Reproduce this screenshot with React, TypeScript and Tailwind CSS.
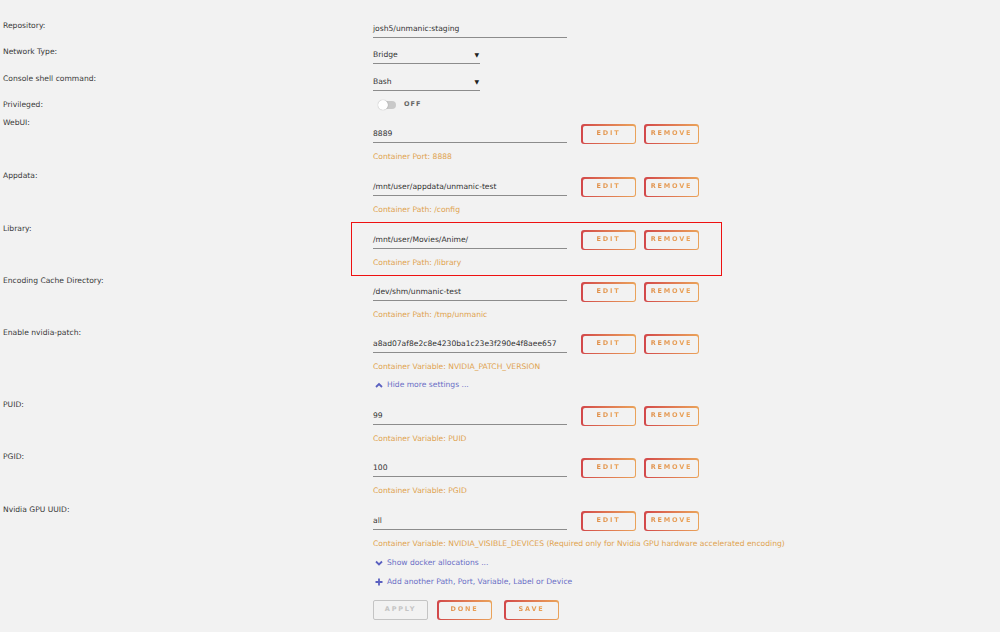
import type { ReactNode } from "react";

const font = { fontFamily: '"DejaVu Sans", Verdana, sans-serif' };

function GradButton({ label, disabled }: { label: string; disabled?: boolean }) {
  if (disabled) {
    return (
      <div className="flex h-[20px] w-[55px] items-center justify-center rounded-[2px] border-[1.5px] border-[#c4c4c4] text-[6.5px] font-bold tracking-[1.8px] text-[#c4c4c4]">
        {label}
      </div>
    );
  }
  return (
    <div className="h-[20px] w-[55px] rounded-[3px] bg-gradient-to-r from-[#d2474a] to-[#eaa35a] p-[1.5px]">
      <div className="flex h-full w-full items-center justify-center rounded-[2px] bg-[#f2f2f2]">
        <span className="bg-gradient-to-r from-[#e0904a] to-[#eba45a] bg-clip-text text-[6.5px] font-bold tracking-[1.8px] text-transparent">
          {label}
        </span>
      </div>
    </div>
  );
}

function Field({ value, width = "w-[194px]", arrow }: { value: string; width?: string; arrow?: boolean }) {
  return (
    <div className={`${width} flex h-[19px] items-start justify-between border-b border-[#8c8c8c] pt-[5px] text-[7.6px] leading-[10px] text-[#333]`}>
      <span>{value}</span>
      {arrow && <span className="pr-[1px] text-[6px] leading-[10px] text-[#222]">▼</span>}
    </div>
  );
}

function Row({ label, height, children }: { label: string; height: string; children: ReactNode }) {
  return (
    <div className={`flex ${height}`}>
      <div className="w-[373px] shrink-0 pl-[3px] pt-[2px] text-[7.6px] leading-[10px] text-[#3a3a3a]">{label}</div>
      <div className="flex-1">{children}</div>
    </div>
  );
}

function Controls({ value }: { value: string }) {
  return (
    <div className="flex items-start">
      <Field value={value} />
      <div className="ml-[14px] flex gap-[8px]">
        <GradButton label="EDIT" />
        <GradButton label="REMOVE" />
      </div>
    </div>
  );
}

function Note({ children }: { children: ReactNode }) {
  return <div className="mt-[8px] text-[7.6px] leading-[10px] text-[#e0a24e]">{children}</div>;
}

function EditRow({ label, value, note, height = "h-[52.5px]", highlight }: { label: string; value: string; note: string; height?: string; highlight?: boolean }) {
  return (
    <Row label={label} height={height}>
      <div className="relative pt-[8px]">
        {highlight && (
          <div className="pointer-events-none absolute left-[-22px] top-0 h-[54px] w-[371px] border border-[#ee1111]" />
        )}
        <Controls value={value} />
        <Note>{note}</Note>
      </div>
    </Row>
  );
}

function Link({ icon, text }: { icon: ReactNode; text: string }) {
  return (
    <div className="flex items-center gap-[4px] pl-[2px] text-[7.6px] leading-[10px] text-[#6a6fc6]">
      {icon}
      <span>{text}</span>
    </div>
  );
}

const ChevUp = (
  <svg width="8" height="6" viewBox="0 0 8 6"><path d="M1 5 L4 2 L7 5" stroke="#5a60c0" strokeWidth="1.8" fill="none" /></svg>
);
const ChevDown = (
  <svg width="8" height="6" viewBox="0 0 8 6"><path d="M1 1.5 L4 4.5 L7 1.5" stroke="#5a60c0" strokeWidth="1.8" fill="none" /></svg>
);
const Plus = (
  <svg width="8" height="8" viewBox="0 0 8 8"><path d="M4 0.5 V7.5 M0.5 4 H7.5" stroke="#5a60c0" strokeWidth="1.8" fill="none" /></svg>
);

export default function App() {
  return (
    <div style={font} className="h-[632px] w-[1000px] overflow-hidden bg-[#f2f2f2] pt-[19px]">
      <Row label="Repository:" height="h-[26px]">
        <Field value="josh5/unmanic:staging" />
      </Row>
      <Row label="Network Type:" height="h-[26.5px]">
        <Field value="Bridge" width="w-[107px]" arrow />
      </Row>
      <Row label="Console shell command:" height="h-[26.5px]">
        <Field value="Bash" width="w-[107px]" arrow />
      </Row>
      <Row label="Privileged:" height="h-[18px]">
        <div className="flex items-center pl-[6px] pt-[2px]">
          <div className="relative h-[8px] w-[17px] rounded-full bg-[#c9c9c9]">
            <div className="absolute left-[-1px] top-[-1px] h-[10px] w-[10px] rounded-full bg-white shadow-[0_0_1px_rgba(0,0,0,0.4)]" />
          </div>
          <span className="ml-[8px] text-[6.5px] font-bold tracking-[1px] text-[#666]">OFF</span>
        </div>
      </Row>
      <EditRow label="WebUI:" value="8889" note="Container Port: 8888" height="h-[53px]" />
      <EditRow label="Appdata:" value="/mnt/user/appdata/unmanic-test" note="Container Path: /config" height="h-[53px]" />
      <EditRow label="Library:" value="/mnt/user/Movies/Anime/" note="Container Path: /library" height="h-[52px]" highlight />
      <EditRow label="Encoding Cache Directory:" value="/dev/shm/unmanic-test" note="Container Path: /tmp/unmanic" height="h-[52px]" />
      <Row label="Enable nvidia-patch:" height="h-[72px]">
        <div className="pt-[8px]">
          <Controls value="a8ad07af8e2c8e4230ba1c23e3f290e4f8aee657" />
          <Note>Container Variable: NVIDIA_PATCH_VERSION</Note>
          <div className="mt-[8px]">
            <Link icon={ChevUp} text="Hide more settings ..." />
          </div>
        </div>
      </Row>
      <EditRow label="PUID:" value="99" note="Container Variable: PUID" height="h-[52px]" />
      <EditRow label="PGID:" value="100" note="Container Variable: PGID" height="h-[53px]" />
      <Row label="Nvidia GPU UUID:" height="h-[120px]">
        <div className="pt-[8px]">
          <Controls value="all" />
          <Note>
            Container Variable: NVIDIA_VISIBLE_DEVICES (Required only for Nvidia GPU hardware accelerated encoding)
          </Note>
          <div className="mt-[9px]">
            <Link icon={ChevDown} text="Show docker allocations ..." />
          </div>
          <div className="mt-[9px]">
            <Link icon={Plus} text="Add another Path, Port, Variable, Label or Device" />
          </div>
          <div className="mt-[13px] flex">
            <GradButton label="APPLY" disabled />
            <div className="ml-[9px]">
              <GradButton label="DONE" />
            </div>
            <div className="ml-[12px]">
              <GradButton label="SAVE" />
            </div>
          </div>
        </div>
      </Row>
    </div>
  );
}
